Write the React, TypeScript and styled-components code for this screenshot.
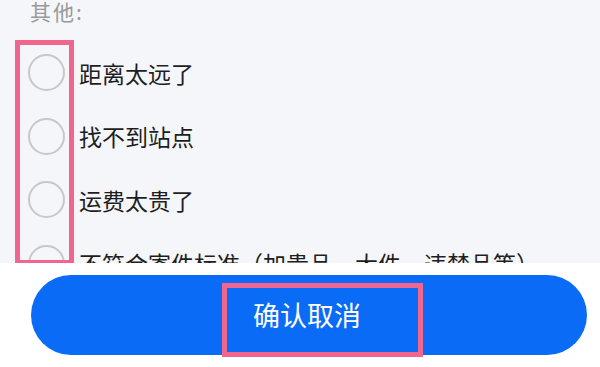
import React from "react";
import styled, { createGlobalStyle } from "styled-components";

const GlobalStyle = createGlobalStyle`
  html, body {
    margin: 0;
    padding: 0;
    width: 600px;
    height: 367px;
    overflow: hidden;
    font-family: "Noto Sans CJK SC", "Noto Sans", sans-serif;
  }
`;

const Page = styled.div`
  display: flex;
  flex-direction: column;
  width: 600px;
  height: 367px;
`;

const List = styled.div`
  position: relative;
  height: 263px;
  flex-shrink: 0;
  overflow: hidden;
  background: #f5f6fa;
  padding-left: 28px;
  box-sizing: border-box;
`;

const Heading = styled.div`
  margin: 0 0 0 2px;
  font-size: 21px;
  line-height: 22px;
  letter-spacing: 2px;
  color: #999;
`;

const Options = styled.div`
  display: flex;
  flex-direction: column;
  margin-top: 19px;
`;

const Row = styled.label`
  display: flex;
  align-items: center;
  gap: 14px;
  height: 63.5px;
  flex-shrink: 0;
`;

const Radio = styled.span`
  width: 37px;
  height: 37px;
  flex-shrink: 0;
  border-radius: 50%;
  border: 2px solid #c8c8c8;
  box-sizing: border-box;
`;

const OptionText = styled.span`
  font-size: 23px;
  line-height: 30px;
  color: #1e1e1e;
  white-space: nowrap;
`;

const Highlight = styled.div<{ $left: number; $top: number; $w: number; $h: number }>`
  position: absolute;
  left: ${(p) => p.$left}px;
  top: ${(p) => p.$top}px;
  width: ${(p) => p.$w}px;
  height: ${(p) => p.$h}px;
  border: 5px solid #f0668f;
  box-sizing: border-box;
  pointer-events: none;
`;

const Footer = styled.div`
  flex: 1;
  background: #fff;
  padding: 12px 13px 0 31px;
`;

const ConfirmButton = styled.button`
  position: relative;
  width: 556px;
  height: 80px;
  border: none;
  border-radius: 40px;
  background: #0a6cf6;
  color: #fff;
  font-family: inherit;
  font-size: 27px;
  padding: 0 4px 2px 0;
  display: flex;
  align-items: center;
  justify-content: center;
`;

const options = [
  "距离太远了",
  "找不到站点",
  "运费太贵了",
  "不符合寄件标准（加贵品、大件、违禁品等）",
];

export default function App() {
  return (
    <Page>
      <GlobalStyle />
      <List>
        <Heading>其他:</Heading>
        <Options>
          {options.map((o) => (
            <Row key={o}>
              <Radio />
              <OptionText>{o}</OptionText>
            </Row>
          ))}
        </Options>
        <Highlight $left={15} $top={40} $w={59} $h={225} />
      </List>
      <Footer>
        <ConfirmButton>
          确认取消
          <Highlight $left={191} $top={8} $w={201} $h={74} />
        </ConfirmButton>
      </Footer>
    </Page>
  );
}
